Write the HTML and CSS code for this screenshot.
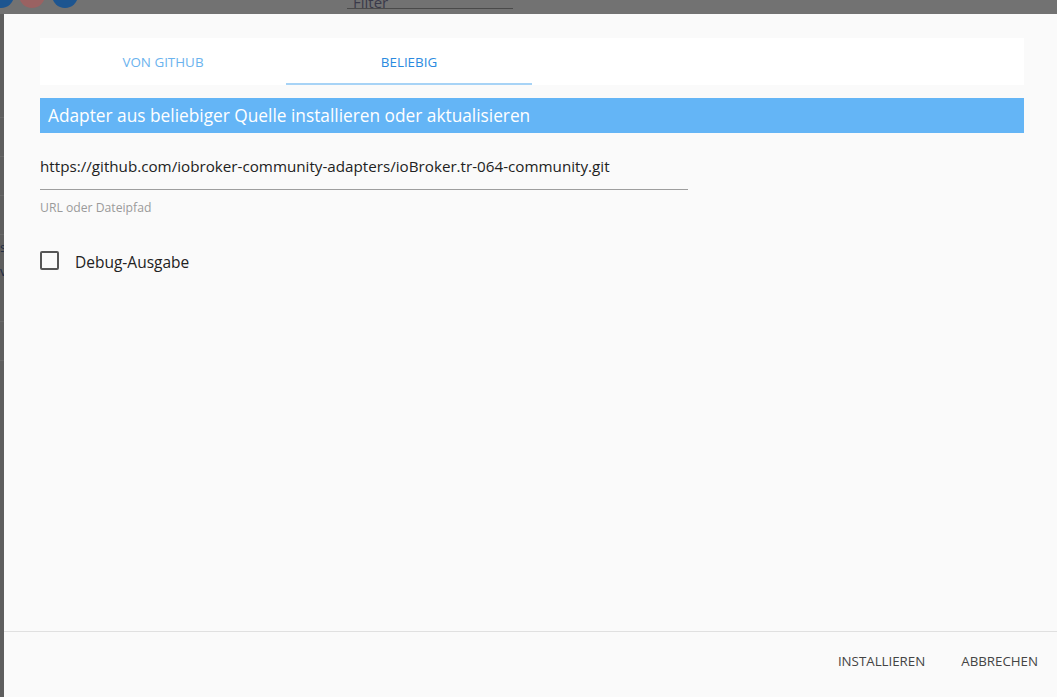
FILE: index.html
```html
<!DOCTYPE html>
<html lang="de">
<head>
  <meta charset="UTF-8" />
  <meta name="viewport" content="width=device-width, initial-scale=1.0"/>
  <title>Adapter installieren | ioBroker</title>
  <link rel="stylesheet" href="styles.css">
</head>
<body>
  <!-- Seite im Hintergrund (abgedunkelt) -->
  <div class="page">
    <div class="page-top">
      <div class="avatars">
        <span class="dot blue"></span>
        <span class="dot red"></span>
        <span class="dot blue"></span>
      </div>
      <div class="filter">Filter</div>
    </div>
    <div class="page-side">
      <span class="side-row"></span>
      <span class="side-row"></span>
      <span class="side-row"></span>
      <span class="side-row"></span>
      <span class="side-letter">s</span>
      <span class="side-letter">v</span>
      <span class="side-row"></span>
      <span class="side-row"></span>
    </div>
  </div>

  <!-- Dialog -->
  <div class="dialog">
    <div class="dialog-body">
      <div class="tabs">
        <div class="tab">Von GitHub</div>
        <div class="tab active">Beliebig</div>
      </div>

      <div class="section-title">Adapter aus beliebiger Quelle installieren oder aktualisieren</div>

      <div class="field">
        <div class="field-input">https://github.com/iobroker-community-adapters/ioBroker.tr-064-community.git</div>
        <div class="field-help">URL oder Dateipfad</div>
      </div>

      <label class="check">
        <span class="check-box"></span>
        <span>Debug-Ausgabe</span>
      </label>
    </div>

    <div class="dialog-actions">
      <button class="btn">Installieren</button>
      <button class="btn">Abbrechen</button>
    </div>
  </div>
</body>
</html>
```

FILE: styles.css
```css
body {
  margin: 0;
  font-family: 'Open Sans', 'Noto Sans', sans-serif;
  background: #727272;
  width: 1057px;
  height: 697px;
  overflow: hidden;
  position: relative;
}

/* Hintergrundseite */
.page-top {
  height: 14px;
  display: flex;
  overflow: hidden;
}

.avatars {
  display: flex;
  gap: 5px;
  margin-left: -12px;
  margin-top: -18px;
}

.dot {
  width: 26px;
  height: 26px;
  border-radius: 50%;
}

.dot.blue {
  background: #1d5590;
}

.dot.red {
  background: #9a6262;
}

.avatars .dot:last-child {
  margin-left: 2px;
}

.filter {
  margin-left: 269px;
  width: 160px;
  height: 8px;
  border-bottom: 1px solid #4a4a4a;
  color: #3a3a4a;
  font-size: 15px;
  line-height: 4px;
  padding-left: 6px;
}

.page-side {
  width: 4px;
  height: 683px;
  background: #5e5e5e;
  display: flex;
  flex-direction: column;
  overflow: hidden;
  padding-top: 65px;
  box-sizing: border-box;
}

.side-row {
  height: 38px;
  flex-shrink: 0;
  border-bottom: 1px solid #686868;
}

.side-letter {
  height: 24px;
  flex-shrink: 0;
  font-size: 13px;
  color: #1b2a44;
  line-height: 24px;
}

/* Dialog */
.dialog {
  position: absolute;
  left: 4px;
  top: 14px;
  right: 0;
  bottom: 0;
  background: #fafafa;
  display: flex;
  flex-direction: column;
}

.dialog-body {
  flex: 1;
  padding: 24px 33px 0 36px;
}

.tabs {
  display: flex;
  height: 47px;
  background: white;
}

.tab {
  width: 246px;
  display: flex;
  align-items: center;
  justify-content: center;
  text-transform: uppercase;
  font-size: 13.4px;
  color: #6bb3ee;
  box-sizing: border-box;
  padding-top: 1px;
}

.tab.active {
  color: #2a8ae0;
  border-bottom: 2px solid #a7d3f6;
  padding-top: 3px;
}

.section-title {
  margin-top: 13px;
  height: 35px;
  background: #64b5f6;
  color: white;
  font-size: 17.3px;
  line-height: 36px;
  padding-left: 8px;
}

.field {
  width: 648px;
  margin-top: 17px;
}

.field-input {
  font-size: 15.2px;
  color: #222;
  height: 39px;
  line-height: 32px;
  border-bottom: 1px solid #9e9e9e;
}

.field-help {
  font-size: 12.2px;
  color: #9a9a9a;
  margin-top: 9px;
}

.check {
  display: flex;
  align-items: center;
  gap: 16px;
  margin-top: 35px;
  font-size: 15.5px;
  color: #222;
}

.check-box {
  width: 15px;
  height: 15px;
  border: 2px solid #555;
  border-radius: 2px;
  margin-top: -4px;
}

.dialog-actions {
  height: 66px;
  border-top: 1px solid #e0e0e0;
  display: flex;
  justify-content: flex-end;
  align-items: center;
  gap: 12px;
  padding-right: 7px;
  padding-bottom: 8px;
  box-sizing: border-box;
}

.btn {
  background: none;
  border: none;
  font-family: inherit;
  font-size: 13.3px;
  text-transform: uppercase;
  color: #444;
  padding: 6px 12px;
  cursor: pointer;
}
```
